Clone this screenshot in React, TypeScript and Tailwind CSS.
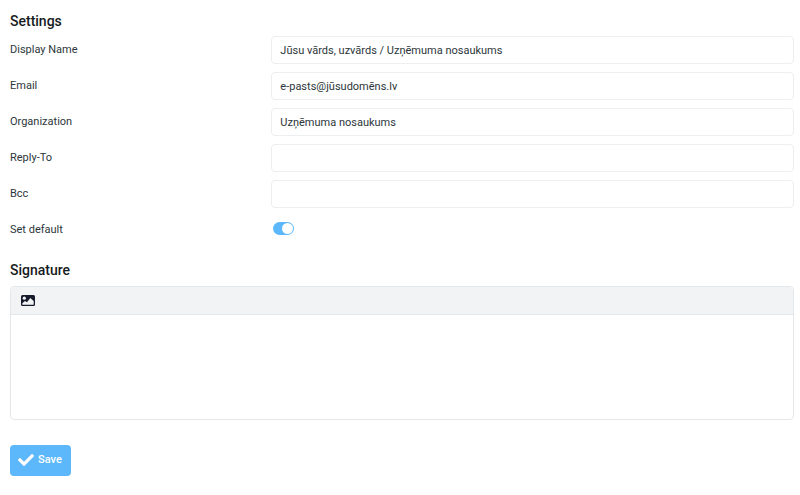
import type { ReactNode } from 'react';
import { FaCheck } from 'react-icons/fa';

function Field({ id, label, children }: { id: string; label: string; children: ReactNode }) {
  return (
    <div className="flex min-h-7 items-start">
      <label htmlFor={id} className="w-1/3 shrink-0 pt-1.5 text-[11px] leading-4">{label}</label>
      <div className="flex min-w-0 flex-1">{children}</div>
    </div>
  );
}

const fields = [
  { id: 'name', label: 'Display Name', type: 'text', value: 'Jūsu vārds, uzvārds / Uzņēmuma nosaukums' },
  { id: 'email', label: 'Email', type: 'text', value: 'e-pasts@jūsudomēns.lv' },
  { id: 'organization', label: 'Organization', type: 'text', value: 'Uzņēmuma nosaukums' },
  { id: 'reply-to', label: 'Reply-To', type: 'text', value: '' },
  { id: 'bcc', label: 'Bcc', type: 'text', value: '' },
];

export default function App() {
  return (
    <form className="min-h-screen bg-white pt-[13px] pr-1.5 pl-2.5 font-[Roboto,sans-serif] text-[#2c363a]">
      <h2 className="text-sm leading-4 font-medium text-[#161b1d]">Settings</h2>
      <div className="mt-[7px] flex flex-col gap-2">
        {fields.map((f) => (
          <Field key={f.id} id={f.id} label={f.label}>
            <input
              id={f.id}
              type={f.type}
              defaultValue={f.value}
              className="h-7 w-full rounded-sm border border-[#eceeef] bg-white px-2 text-[11px] leading-4 outline-none focus:border-[#5db8fb]"
            />
          </Field>
        ))}
        <Field id="default" label="Set default">
          <input
            id="default"
            type="checkbox"
            role="switch"
            defaultChecked
            className="mt-1.5 ml-0.5 h-[13px] w-[21px] appearance-none rounded-full bg-[#b6c0c5] p-px before:block before:size-[11px] before:rounded-full before:bg-white checked:bg-[#5db8fb] checked:before:ml-2"
          />
        </Field>
      </div>
      <h2 className="mt-[18px] text-sm leading-4 font-medium text-[#161b1d]">Signature</h2>
      <div className="mt-2 overflow-hidden rounded-sm border border-[#e4e8ea]">
        <div className="flex h-7 items-center border-b border-[#e4e8ea] bg-[#f1f3f4] pl-2.5">
          <button type="button" aria-label="Insert image">
            <svg viewBox="0 0 14 11" className="h-[11px] w-3.5" fill="none">
              <rect width="14" height="11" rx="1.5" fill="#161b2d" />
              <circle cx="3.3" cy="3.2" r="1.6" fill="#f1f3f4" />
              <path d="M1.3 9.7V8.2L4 6l2 1.3L9.3 3l3.4 3v3.7Z" fill="#f1f3f4" />
            </svg>
          </button>
        </div>
        <textarea aria-label="Signature" className="block h-26 w-full resize-none p-2 text-[11px] outline-none" />
      </div>
      <button type="submit" className="mt-[25px] flex h-[31px] items-center gap-1 rounded-sm bg-[#5db8fb] pr-[9px] pb-0.5 pl-2 text-[11px] leading-4 font-medium text-white">
        <FaCheck className="size-4" />
        Save
      </button>
    </form>
  );
}
